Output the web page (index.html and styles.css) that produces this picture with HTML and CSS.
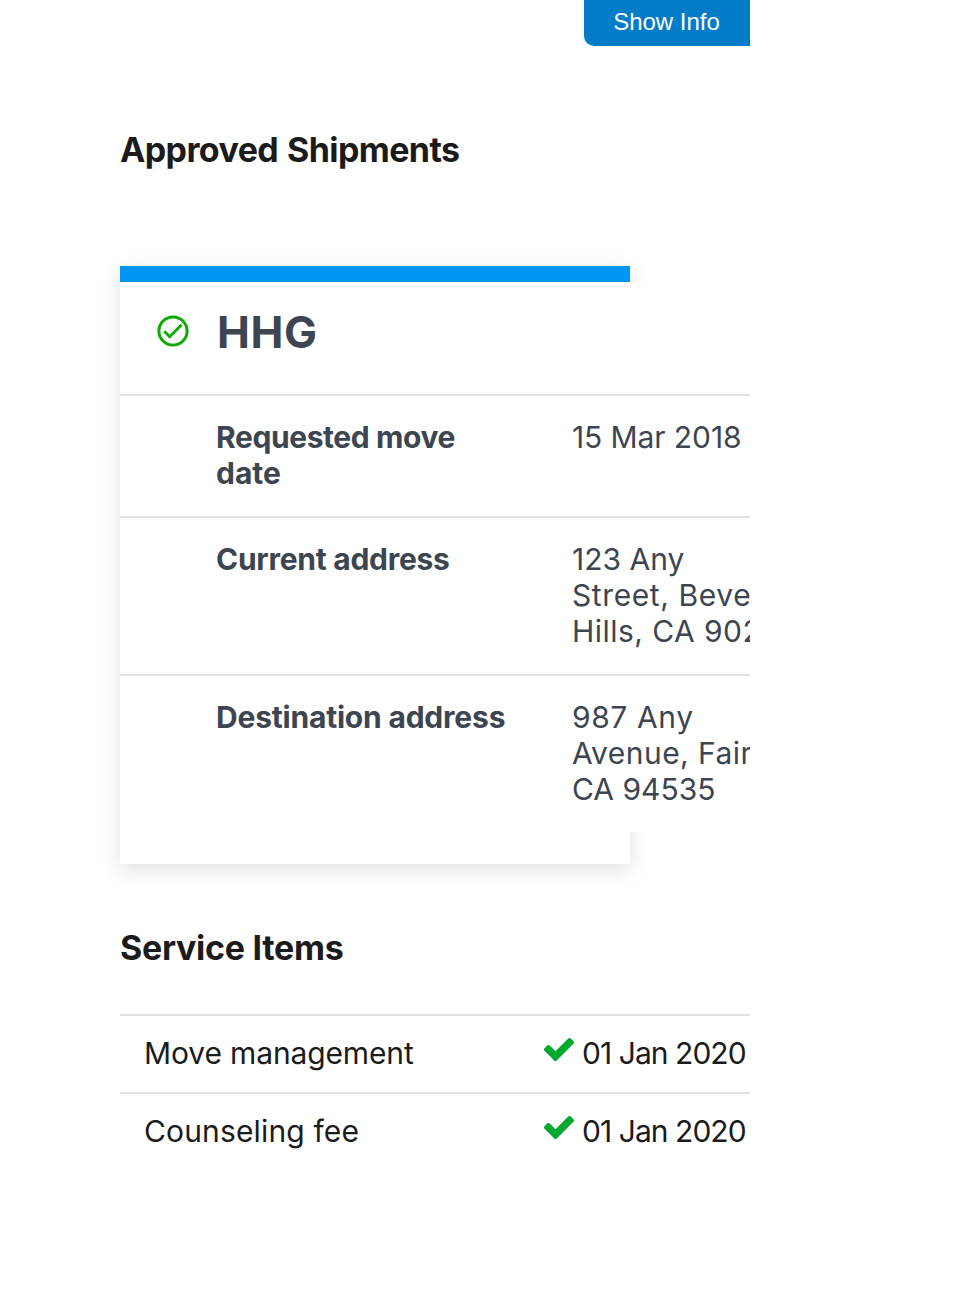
FILE: index.html
```html
<!DOCTYPE html>
<html lang="en">
<head>
<meta charset="utf-8">
<title>Approved Shipments</title>
<link rel="stylesheet" href="styles.css">
</head>
<body>
<main class="page">
  <div class="toolbar"><button class="info-button" type="button">Show Info</button></div>
  <div class="content">
    <h2 class="section-title approved">Approved Shipments</h2>
    <section class="card">
      <header class="card-head">
        <svg class="status" viewBox="0 0 24 24" aria-hidden="true"><path fill="none" stroke="#0faa00" stroke-width="1.800" d="m6.500 12.100 3.400 3.500 7.500-7.500"/><circle cx="12" cy="12" r="8.900" fill="none" stroke="#0faa00" stroke-width="1.900"/></svg>
        <h3 class="card-title">HHG</h3>
      </header>
      <dl class="details">
        <div class="detail-row"><dt class="label"><span class="requested">Requested move</span><br>date</dt><dd class="value date">15 Mar 2018</dd></div>
        <div class="detail-row"><dt class="label current">Current address</dt><dd class="value">123 Any<br><span class="street">Street, Beverly</span><br><span class="city">Hills, CA 90210</span></dd></div>
        <div class="detail-row"><dt class="label destination">Destination address</dt><dd class="value"><span class="street">987 Any</span><br><span class="avenue">Avenue, Fairfield,</span><br>CA 94535</dd></div>
      </dl>
    </section>
    <h2 class="section-title services">Service Items</h2>
    <ul class="service-list">
      <li class="service-row"><span class="service-name management">Move management</span><svg class="check" viewBox="121 334 1550 1188" aria-hidden="true"><path fill="#00a92d" d="M1671 566q0 40-28 68l-724 724-136 136q-28 28-68 28t-68-28l-136-136-362-362q-28-28-28-68t28-68l136-136q28-28 68-28t68 28l294 295 656-657q28-28 68-28t68 28l136 136q28 28 28 68z"/></svg><span class="service-date">01 Jan 2020</span></li>
      <li class="service-row"><span class="service-name counseling">Counseling fee</span><svg class="check" viewBox="121 334 1550 1188" aria-hidden="true"><path fill="#00a92d" d="M1671 566q0 40-28 68l-724 724-136 136q-28 28-68 28t-68-28l-136-136-362-362q-28-28-28-68t28-68l136-136q28-28 68-28t68 28l294 295 656-657q28-28 68-28t68 28l136 136q28 28 28 68z"/></svg><span class="service-date">01 Jan 2020</span></li>
    </ul>
  </div>
</main>
</body>
</html>
```
FILE: styles.css
```css
* { box-sizing: border-box; }
body { margin: 0; background: #fff; color: #1b1b1b; font: 30px/36px Inter, "Liberation Sans", sans-serif; }
h2, h3, dl, dd, ul { margin: 0; padding: 0; }
.page { width: 750px; height: 1290px; overflow: hidden; }
.toolbar { display: flex; justify-content: flex-end; height: 46px; }
.info-button { width: 166px; height: 46px; padding: 0 1px 2px 0; border: 0; border-radius: 0 0 0 10px; background: #027bc9; color: #fff; font: 24px/44px "Liberation Sans", sans-serif; }
.content { padding-left: 120px; }
.section-title { font-size: 34px; line-height: 40px; font-weight: 700; white-space: nowrap; }
.approved { margin-top: 84px; letter-spacing: -.6px; word-spacing: 1.5px; }
.services { margin-top: 64px; letter-spacing: -.3px; }
.card { width: 510px; height: 598px; margin-top: 96px; border-top: 16px solid #0096f4; background: #fff; color: #3d4551; box-shadow: 0 6px 20px rgba(0, 0, 0, .12); }
.card-head { display: flex; width: 630px; height: 112px; background: #fff; padding: 29px 0 0 34px; }
.status { width: 38px; height: 38px; margin-top: .5px; }
.card-title { margin-left: 25px; font-size: 44px; line-height: 42px; letter-spacing: .6px; }
.details { width: 630px; background: #fff; }
.detail-row { display: flex; padding: 23px 0 25px 96px; border-top: 2px solid #dfe1e2; }
.label { flex: 0 0 356px; font-weight: 700; white-space: nowrap; }
.requested { letter-spacing: -.4px; }
.current { letter-spacing: -.27px; }
.destination { letter-spacing: -.2px; }
.value { white-space: nowrap; }
.date { letter-spacing: -.1px; }
.street { letter-spacing: .6px; }
.city { letter-spacing: .45px; }
.avenue { letter-spacing: .45px; }
.service-list { list-style: none; margin-top: 46px; }
.service-row { display: flex; height: 78px; padding: 19px 0 21px 24px; border-top: 2px solid #dfe1e2; white-space: nowrap; }
.service-name { flex: 0 0 400px; }
.management { letter-spacing: -.13px; }
.counseling { letter-spacing: .15px; }
.check { width: 30px; height: 23px; margin-top: 2.5px; flex: none; }
.service-date { margin-left: 8px; letter-spacing: -.95px; }
```
